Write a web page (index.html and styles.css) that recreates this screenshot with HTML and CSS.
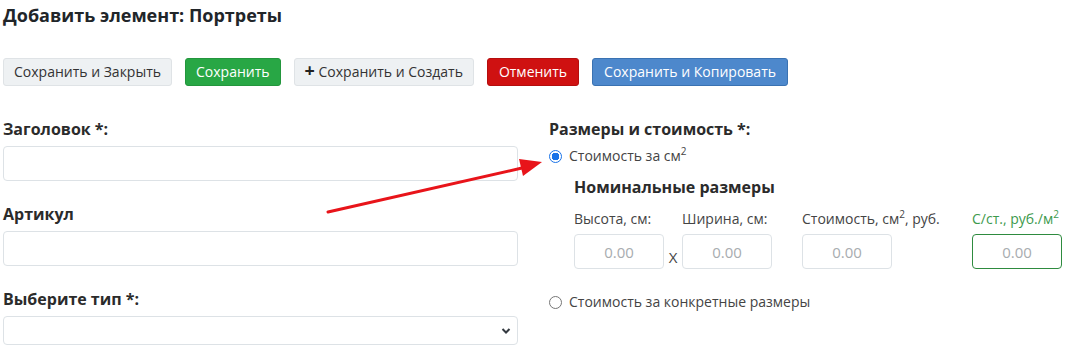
FILE: index.html
```html
<!DOCTYPE html>
<html lang="ru">
<head>
<meta charset="utf-8">
<title>Добавить элемент: Портреты</title>
<link rel="stylesheet" href="styles.css">
</head>
<body>
<div class="page">
  <h1 class="title">Добавить элемент: Портреты</h1>
  <div class="toolbar">
    <button class="btn btn-light">Сохранить и Закрыть</button>
    <button class="btn btn-green">Сохранить</button>
    <button class="btn btn-light"><span class="plus">+</span> Сохранить и Создать</button>
    <button class="btn btn-red">Отменить</button>
    <button class="btn btn-blue">Сохранить и Копировать</button>
  </div>
  <div class="form">
    <div class="col-left">
      <div class="group">
        <label class="lbl">Заголовок *:</label>
        <input class="field" type="text">
      </div>
      <div class="group">
        <label class="lbl">Артикул</label>
        <input class="field" type="text">
      </div>
      <div class="group">
        <label class="lbl">Выберите тип *:</label>
        <div class="select">
          <svg class="chev" width="10" height="8" viewBox="0 0 10 8"><path d="M1.5 2 L5 5.5 L8.5 2" fill="none" stroke="#343a40" stroke-width="2"/></svg>
        </div>
      </div>
    </div>
    <div class="col-right">
      <div class="lbl">Размеры и стоимость *:</div>
      <label class="radio-row first">
        <span class="radio checked"></span>
        <span>Стоимость за см<sup>2</sup></span>
      </label>
      <div class="nominal">
        <div class="sub-title">Номинальные размеры</div>
        <div class="sizes">
          <div class="cell">
            <div class="cap">Высота, см:</div>
            <div class="box">0.00</div>
          </div>
          <div class="times">X</div>
          <div class="cell">
            <div class="cap">Ширина, см:</div>
            <div class="box">0.00</div>
          </div>
          <div class="cell cost">
            <div class="cap">Стоимость, см<sup>2</sup>, руб.</div>
            <div class="box">0.00</div>
          </div>
          <div class="cell price">
            <div class="cap green">С/ст., руб./м<sup>2</sup></div>
            <div class="box box-green">0.00</div>
          </div>
        </div>
      </div>
      <label class="radio-row second">
        <span class="radio"></span>
        <span>Стоимость за конкретные размеры</span>
      </label>
    </div>
  </div>
  <svg class="arrow" width="1078" height="357" viewBox="0 0 1078 357">
    <line x1="328" y1="212" x2="522" y2="168" stroke="#e8141a" stroke-width="3" stroke-linecap="round"/>
    <polygon points="542,162 519,159 523,176" fill="#e8141a"/>
  </svg>
</div>
</body>
</html>
```

FILE: styles.css
```css
* { box-sizing: border-box; }
html, body { margin: 0; padding: 0; background: #fff; }
body {
  font-family: "Open Sans", "Liberation Sans", sans-serif;
  color: #212529;
}
.page { position: relative; padding: 3px 3px 0 3px; width: 1078px; height: 357px; overflow: hidden; }
.title {
  margin: 0;
  font-size: 18px;
  font-weight: 700;
  line-height: 24px;
  color: #212529;
}
.toolbar {
  display: flex;
  gap: 13px;
  margin-top: 31px;
}
.btn {
  font-family: inherit;
  font-size: 14px;
  height: 28px;
  padding: 0 10px;
  border-radius: 3px;
  border: 1px solid transparent;
  line-height: 26px;
  cursor: pointer;
}
.btn-light { background: #eef1f3; border-color: #dfe3e6; color: #333; }
.btn-green { background: #28a745; border-color: #23963d; color: #fff; padding: 0 10px; }
.btn-red { background: #cf1111; border-color: #b50e0e; color: #fff; padding: 0 11px; }
.btn-blue { background: #4d88cc; border-color: #3a72b2; color: #fff; padding: 0 11px; }
.plus { font-weight: 700; font-size: 18px; color: #222; line-height: 0; }
.form {
  display: grid;
  grid-template-columns: 515px 1fr;
  column-gap: 31px;
  margin-top: 33px;
}
.group { margin-bottom: 23px; }
.lbl {
  display: block;
  font-size: 16px;
  font-weight: 700;
  color: #2b2b2b;
  line-height: 20px;
  margin-bottom: 7px;
}
.field {
  display: block;
  width: 515px;
  height: 35px;
  border: 1px solid #dde2e6;
  border-radius: 4px;
  background: #fff;
  font-family: inherit;
}
.select {
  width: 515px;
  height: 29px;
  border: 1px solid #dde2e6;
  border-radius: 4px;
  display: flex;
  justify-content: flex-end;
  align-items: center;
  padding-right: 6px;
}
.radio-row {
  display: flex;
  align-items: center;
  gap: 7px;
  font-size: 14px;
  color: #444;
  line-height: 20px;
}
.radio-row sup { font-size: 10px; line-height: 0; }
.radio {
  width: 13px;
  height: 13px;
  border-radius: 50%;
  border: 1px solid #767676;
  background: #fff;
}
.radio.checked {
  border: 1px solid #1a73e8;
  background: radial-gradient(circle, #1a73e8 0 3.6px, #fff 4px);
}
.first { margin-top: 3px; }
.nominal { padding-left: 25px; margin-top: 11px; }
.sub-title {
  font-size: 16px;
  font-weight: 700;
  color: #2b2b2b;
  line-height: 20px;
}
.sizes {
  display: flex;
  align-items: flex-end;
  margin-top: 12px;
}
.cell { display: flex; flex-direction: column; width: 90px; }
.cap {
  font-size: 14px;
  color: #444;
  line-height: 20px;
  margin-bottom: 5px;
  white-space: nowrap;
}
.cap sup { font-size: 10px; line-height: 0; }
.cap.green { color: #3d9a4d; }
.box {
  width: 90px;
  height: 35px;
  border: 1px solid #dde2e6;
  border-radius: 4px;
  font-size: 15px;
  color: #a8acb0;
  display: flex;
  align-items: center;
  justify-content: center;
}
.box-green { border-color: #2e8b3f; }
.times {
  width: 18px;
  font-size: 15px;
  color: #444;
  text-align: center;
  padding-bottom: 2px;
  line-height: 20px;
}
.cost { margin-left: 30px; }
.price { margin-left: 80px; }
.second { margin-top: 23px; }
.arrow { position: absolute; left: 0; top: 0; pointer-events: none; }
```
